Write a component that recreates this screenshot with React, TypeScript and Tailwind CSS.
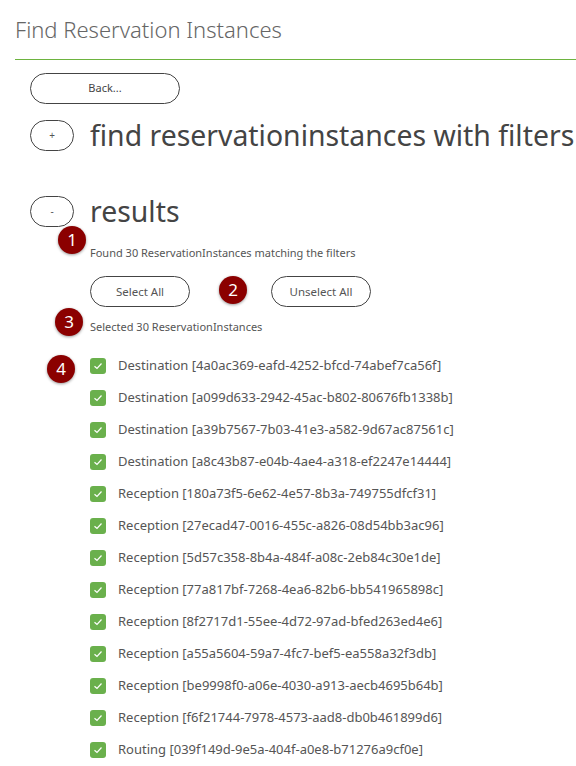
import React from "react";

const items = [
  "Destination [4a0ac369-eafd-4252-bfcd-74abef7ca56f]",
  "Destination [a099d633-2942-45ac-b802-80676fb1338b]",
  "Destination [a39b7567-7b03-41e3-a582-9d67ac87561c]",
  "Destination [a8c43b87-e04b-4ae4-a318-ef2247e14444]",
  "Reception [180a73f5-6e62-4e57-8b3a-749755dfcf31]",
  "Reception [27ecad47-0016-455c-a826-08d54bb3ac96]",
  "Reception [5d57c358-8b4a-484f-a08c-2eb84c30e1de]",
  "Reception [77a817bf-7268-4ea6-82b6-bb541965898c]",
  "Reception [8f2717d1-55ee-4d72-97ad-bfed263ed4e6]",
  "Reception [a55a5604-59a7-4fc7-bef5-ea558a32f3db]",
  "Reception [be9998f0-a06e-4030-a913-aecb4695b64b]",
  "Reception [f6f21744-7978-4573-aad8-db0b461899d6]",
  "Routing [039f149d-9e5a-404f-a0e8-b71276a9cf0e]",
];

function Badge({ n, className }: { n: number; className: string }) {
  return (
    <span className={"absolute w-[28px] h-[28px] rounded-full bg-[#8b0000] text-white text-[17px] flex items-center justify-center shadow-[0_1px_3px_rgba(0,0,0,0.4)] " + className}>
      {n}
    </span>
  );
}

export default function App() {
  return (
    <div className="relative h-[766px] overflow-hidden bg-white text-[#555] font-['Noto_Sans',sans-serif]">
      <div className="pl-[15px] pt-[14px]">
        <h1 className="text-[22px] font-light text-[#666] leading-[30px]">Find Reservation Instances</h1>
        <div className="mt-[15px] border-t border-[#6db33f]" />
      </div>
      <div className="pl-[30px] pt-[13px]">
        <button className="w-[150px] h-[31px] rounded-full border border-[#444] text-[11px] text-[#444]">Back...</button>
        <div className="flex items-center mt-[15px] h-[32px]">
          <button className="w-[44px] h-[31px] rounded-full border border-[#444] text-[10px] leading-none">+</button>
          <span className="ml-[16px] text-[28.4px] text-[#444] leading-none">find reservationinstances with filters</span>
        </div>
        <div className="flex items-center mt-[44px] h-[32px]">
          <button className="w-[44px] h-[31px] rounded-full border border-[#444] text-[10px] leading-none">-</button>
          <span className="ml-[16px] text-[28.4px] text-[#444] leading-none">results</span>
        </div>
        <div className="pl-[60px]">
          <p className="mt-[18px] text-[11px] leading-[16px]">Found 30 ReservationInstances matching the filters</p>
          <div className="flex gap-[81px] mt-[15px]">
            <button className="w-[100px] h-[31px] rounded-full border border-[#444] text-[11.5px]">Select All</button>
            <button className="w-[100px] h-[31px] rounded-full border border-[#444] text-[11.5px]">Unselect All</button>
          </div>
          <p className="mt-[12px] text-[11px] leading-[16px]">Selected 30 ReservationInstances</p>
          <ul className="mt-[15px] flex flex-col">
            {items.map((t) => (
              <li key={t} className="flex items-center h-[32px]">
                <span className="w-[16px] h-[16px] rounded-[3px] bg-[#6ab04c] flex items-center justify-center">
                  <svg width="10" height="10" viewBox="0 0 10 10"><path d="M1.5 5.2 4 7.5 8.5 2.5" stroke="white" strokeWidth="1.2" fill="none" /></svg>
                </span>
                <span className="ml-[12px] text-[13px] text-[#555] whitespace-nowrap">{t}</span>
              </li>
            ))}
          </ul>
        </div>
      </div>
      <Badge n={1} className="left-[58px] top-[226px]" />
      <Badge n={2} className="left-[219px] top-[276px]" />
      <Badge n={3} className="left-[55px] top-[308px]" />
      <Badge n={4} className="left-[47px] top-[355px]" />
    </div>
  );
}
